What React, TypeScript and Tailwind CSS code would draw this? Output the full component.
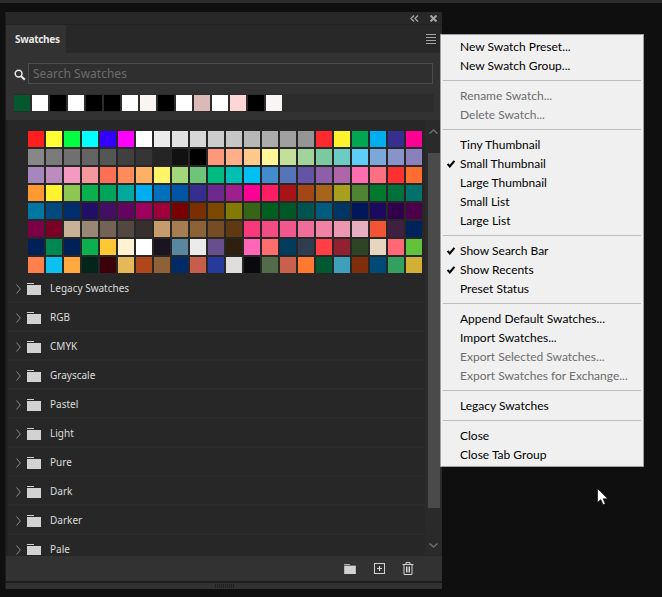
import React from "react";

const recents = [
  "#04572f", "#ffffff", "#000000", "#ffffff", "#000000", "#000000", "#ffffff", "#faf5f3",
  "#000000", "#ffffff", "#dcb9b9", "#ffffff", "#ffd6d6", "#000000", "#faf5f5",
];

const swatches = [
  "#ff1f1f", "#ffff33", "#00ff41", "#00ffff", "#3300ff", "#ff00ff", "#ffffff", "#ebebeb", "#e1e1e1", "#d7d7d7", "#cccccc", "#c6c6c6", "#b7b7b7", "#acacac", "#a0a0a0", "#959595", "#ff2a2f", "#fff22e", "#00a651", "#00aeef", "#362f8f", "#ff0097",
  "#878787", "#7b7b7b", "#707070", "#646464", "#545655", "#404040", "#353535", "#252525", "#111111", "#000000", "#ff977b", "#ffaf89", "#ffc98c", "#fff79a", "#c4df9b", "#a3d39c", "#7cc99f", "#6ecbc4", "#5fcdf5", "#7ca7d9", "#8893ca", "#8a80bb",
  "#a586bd", "#bd8cbf", "#f49ac2", "#f5989d", "#ff6f55", "#ff8c5a", "#ffb163", "#fff568", "#a4d67b", "#6fc47b", "#00bb7f", "#00bfb3", "#00bff3", "#438ccb", "#5574b9", "#6455a4", "#8c5fa8", "#af66a8", "#ff6eae", "#ff6f82", "#ff3030", "#ff6d30",
  "#ff9a33", "#fff22e", "#8dc652", "#09b04e", "#00a55c", "#00a99d", "#00aeef", "#0070bd", "#0054a6", "#372d91", "#6e298f", "#9e1f8e", "#ff0097", "#ff1e64", "#a81318", "#a34717", "#a6651b", "#a7a01f", "#4f8433", "#00792f", "#00713a", "#00726b",
  "#0076a3", "#004a80", "#002d6e", "#200f64", "#440e62", "#630460", "#9e005d", "#9e0039", "#790000", "#7b2e00", "#7d4800", "#827a04", "#366518", "#005e20", "#005826", "#00544f", "#005b7f", "#003663", "#00175a", "#1b0a5e", "#32004b", "#4b0049",
  "#7b0046", "#7a0026", "#c7b299", "#998675", "#736357", "#534741", "#362f2d", "#c69c6d", "#a67c52", "#8c6239", "#754c24", "#603913", "#f9397a", "#f24c82", "#f0578c", "#ef6d9b", "#ef82a5", "#ec97b1", "#e8adc0", "#f15536", "#3f2041", "#00225a",
  "#002157", "#008752", "#002058", "#0db04e", "#ffc733", "#fff2d3", "#ffffff", "#1a1320", "#5a87a0", "#ebebeb", "#674e8c", "#2f1f0f", "#ff66b5", "#ff6e6e", "#003c5e", "#2f3d50", "#ff3e46", "#912030", "#2f4425", "#e8d5c0", "#ff6874", "#62c23a",
  "#ff7f4d", "#0cc0ef", "#ffa940", "#02261a", "#3c000b", "#e5b958", "#b2461b", "#8e6238", "#002b66", "#c75d4b", "#263a9b", "#e0dedc", "#0a0a0e", "#526b4a", "#c8604b", "#ff7a30", "#005931", "#3fa0b9", "#7f2e0a", "#004a78", "#34a060", "#d1b035",
];

const groups = ["Legacy Swatches", "RGB", "CMYK", "Grayscale", "Pastel", "Light", "Pure", "Dark", "Darker", "Pale"];

type MenuItem = { label?: string; checked?: boolean; disabled?: boolean };

const menu: MenuItem[] = [
  { label: "New Swatch Preset..." },
  { label: "New Swatch Group..." },
  {},
  { label: "Rename Swatch...", disabled: true },
  { label: "Delete Swatch...", disabled: true },
  {},
  { label: "Tiny Thumbnail" },
  { label: "Small Thumbnail", checked: true },
  { label: "Large Thumbnail" },
  { label: "Small List" },
  { label: "Large List" },
  {},
  { label: "Show Search Bar", checked: true },
  { label: "Show Recents", checked: true },
  { label: "Preset Status" },
  {},
  { label: "Append Default Swatches..." },
  { label: "Import Swatches..." },
  { label: "Export Selected Swatches...", disabled: true },
  { label: "Export Swatches for Exchange...", disabled: true },
  {},
  { label: "Legacy Swatches" },
  {},
  { label: "Close" },
  { label: "Close Tab Group" },
];

function FolderIcon({ className }: { className: string }) {
  return (
    <svg width="14" height="12" viewBox="0 0 14 12" className={className}>
      <rect x="0" y="0" width="7" height="1" fill="#d2d2d2" />
      <rect x="0" y="2" width="14" height="10" fill="#d2d2d2" />
    </svg>
  );
}

export default function App() {
  return (
    <div className="relative w-[662px] h-[597px] overflow-hidden bg-[#0f0f0f] font-['Noto_Sans',sans-serif]">
      <div className="h-[3px] bg-[#2b2b2b]" />

      {/* Panel */}
      <div className="ml-[5px] mt-[9px] w-[437px] h-[577px] flex flex-col bg-[#323232] border-l border-[#1c1c1c] overflow-hidden">
        <div className="h-[13px] shrink-0 flex items-center justify-end gap-[11px] pr-[5px] bg-[#282828] border-b border-[#222222]">
          <svg width="9" height="7" viewBox="0 0 9 7" fill="none" stroke="#a5a5a5" strokeWidth="1.3">
            <path d="M4 0.5 L1 3.5 L4 6.5 M8 0.5 L5 3.5 L8 6.5" />
          </svg>
          <svg width="7" height="7" viewBox="0 0 7 7" fill="none" stroke="#a5a5a5" strokeWidth="2">
            <path d="M0.5 0.5 L6.5 6.5 M6.5 0.5 L0.5 6.5" />
          </svg>
        </div>

        {/* Tab strip */}
        <div className="h-[28px] shrink-0 flex items-stretch justify-between bg-[#282828]">
          <div className="w-[60px] bg-[#323232] flex items-center pl-[9px] text-[10px] font-bold tracking-[-0.3px] text-[#e6e6e6]">
            Swatches
          </div>
          <div className="flex flex-col gap-[2px] justify-center pr-[6px]">
            <div className="w-[10px] h-px bg-[#a5a5a5]" />
            <div className="w-[10px] h-px bg-[#a5a5a5]" />
            <div className="w-[10px] h-px bg-[#a5a5a5]" />
            <div className="w-[10px] h-px bg-[#a5a5a5]" />
          </div>
        </div>

        {/* Search */}
        <div className="h-[41px] shrink-0 pt-[10px] pl-[8px] flex items-start">
          <svg width="12" height="12" viewBox="0 0 12 12" fill="none" stroke="#e8e8e8" className="mt-[6px] shrink-0">
            <circle cx="4.6" cy="4.6" r="3.4" strokeWidth="1.5" />
            <path d="M7.2 7.2 L10.8 10.8" strokeWidth="2.2" />
          </svg>
          <div className="ml-[2px] w-[405px] h-[21px] border border-[#4c4c4c] bg-[#2f2f2f] flex items-center pl-[4px] pt-px text-[12px] text-[#6c6c6c]">
            Search Swatches
          </div>
        </div>

        {/* Recents */}
        <div className="h-[26px] shrink-0">
          <div className="ml-[8px] w-[420px] h-[18px] flex items-center gap-[2px] bg-[#2c2c2c]">
            {recents.map((c, i) => (
              <div key={i} className="w-[16px] h-[16px]" style={{ backgroundColor: c }} />
            ))}
          </div>
        </div>

        {/* List */}
        <div className="h-[435px] shrink-0 flex border-l-2 border-[#222222] bg-[#272727]">
          <div className="flex-1 overflow-hidden">
            <div className="grid grid-cols-[repeat(22,16px)] gap-[2px] pl-[20px] pt-[11px] pb-px">
              {swatches.map((c, i) => (
                <div key={i} className="w-[16px] h-[16px]" style={{ backgroundColor: c }} />
              ))}
            </div>
            {groups.map((g) => (
              <div key={g} className="h-[29px] flex items-center border-b-2 border-[#2c2c2c] pl-[8px] pt-[2px]">
                <svg width="5" height="10" viewBox="0 0 5 10" fill="none" stroke="#8a8a8a" className="shrink-0">
                  <path d="M0.5 0.5 L4.3 5 L0.5 9.5" />
                </svg>
                <FolderIcon className="ml-[6px] shrink-0" />
                <span className="ml-[9px] text-[10px] text-[#dcdcdc]">{g}</span>
              </div>
            ))}
          </div>
          <div className="w-[17px] shrink-0 flex flex-col items-center bg-[#2a2a2a]">
            <svg width="9" height="5" viewBox="0 0 9 5" fill="none" stroke="#6e6e6e" strokeWidth="1.5" className="mt-[9px] shrink-0">
              <path d="M0.5 4.5 L4.5 1 L8.5 4.5" />
            </svg>
            <div className="mt-[19px] w-[12px] h-[355px] shrink-0 bg-[#4a4a4a]" />
            <svg width="9" height="5" viewBox="0 0 9 5" fill="none" stroke="#6e6e6e" strokeWidth="1.5" className="mt-[35px] shrink-0">
              <path d="M0.5 0.5 L4.5 4 L8.5 0.5" />
            </svg>
          </div>
        </div>

        {/* Bottom bar */}
        <div className="h-[26px] shrink-0 flex items-center justify-end pr-[28px] border-t border-[#262626]">
          <FolderIcon className="w-[12px] h-[10px]" />
          <svg width="12" height="12" viewBox="0 0 12 12" fill="none" stroke="#d2d2d2" className="ml-[18px]">
            <rect x="0.5" y="0.5" width="10" height="10" />
            <path d="M3 5.5 H8 M5.5 3 V8" strokeWidth="1.2" />
          </svg>
          <svg width="12" height="13" viewBox="0 0 12 13" fill="none" stroke="#d2d2d2" className="ml-[16px]">
            <path d="M0.5 2.5 H11.5 M4 2.5 V0.5 H8 V2.5 M2 2.5 V12.5 H10 V2.5 M4.5 4.5 V10.5 M6 4.5 V10.5 M7.5 4.5 V10.5" />
          </svg>
        </div>
        <div className="h-[2px] shrink-0 bg-[#1e1e1e]" />
        <div className="flex-1 flex items-center justify-center">
          <div className="w-[19px] h-[4px] bg-[repeating-linear-gradient(90deg,#1f1f1f_0,#1f1f1f_1px,transparent_1px,transparent_2px)]" />
        </div>
      </div>

      {/* Flyout menu */}
      <div className="absolute left-[440px] top-[34px] w-[204px] h-[433px] bg-[#f0f0f0] border border-[#a0a0a0] pt-[2px] font-['Lato',sans-serif] text-[12px]">
        {menu.map((m, i) =>
          m.label ? (
            <div
              key={i}
              className={`relative h-[19px] flex items-center pl-[19px] pt-px whitespace-nowrap ${m.disabled ? "text-[#6d6d6d]" : "text-black"}`}
            >
              {m.checked && (
                <svg width="8" height="8" viewBox="0 0 8 8" fill="none" stroke="#000000" strokeWidth="2" className="absolute left-[6px] top-[6px]">
                  <path d="M0.6 4 L2.8 6.5 L7.4 0.8" />
                </svg>
              )}
              {m.label}
            </div>
          ) : (
            <div key={i} className="h-[11px] flex items-center px-[2px]">
              <div className="w-full h-px bg-[#bdbdbd]" />
            </div>
          ),
        )}
      </div>

      {/* Mouse cursor */}
      <svg width="12" height="18" viewBox="0 0 12 18" className="absolute left-[597px] top-[488px]">
        <path d="M0.5 0.5 V14.5 L3.8 11.6 L6 16.8 L8.3 15.8 L6.1 10.8 L10.8 10.8 Z" fill="#ffffff" stroke="#000000" strokeWidth="0.6" />
      </svg>
    </div>
  );
}
